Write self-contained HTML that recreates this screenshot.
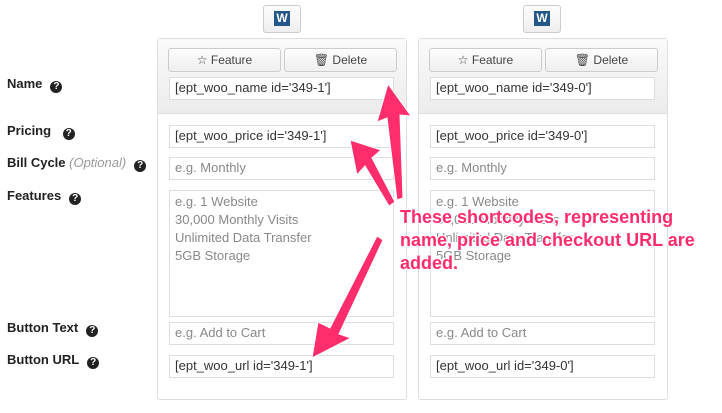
<!DOCTYPE html>
<html><head><style>
body{margin:0;width:722px;height:413px;background:#fff;font-family:"Liberation Sans",sans-serif;position:relative;overflow:hidden}
.a{position:absolute}
.lbl{position:absolute;left:7px;font-size:13px;color:#222;font-weight:bold;font-family:"Liberation Sans",sans-serif}
.q{display:inline-block;width:12px;height:12px;border-radius:50%;background:#222;color:#fff;font-size:10px;text-align:center;line-height:12px;margin-left:8px;vertical-align:-1px}
.col{position:absolute;top:38px;width:248px;height:360px;border:1px solid #ddd;border-radius:3px;background:#fff}
.hd{position:absolute;left:0;top:0;right:0;height:74px;background:linear-gradient(#fafafa,#ececec);border-bottom:1px solid #ddd}
.btn{position:absolute;top:9px;height:22px;border:1px solid #ccc;border-radius:3px;background:linear-gradient(#fdfdfd,#efefef);font-size:12px;color:#444;text-align:center;line-height:22px}
.in{position:absolute;left:11px;width:225px;border:1px solid #ddd;background:#fff;font-size:13px;color:#333;padding-left:5px;box-sizing:border-box;line-height:20px}
.ph{color:#888}
.wb{position:absolute;top:5px;width:36px;height:26px;border:1px solid #ccc;border-radius:3px;background:linear-gradient(#fdfdfd,#eee)}
.wb span{position:absolute;left:10px;top:5px;width:16px;height:15px;background:#23578a;color:#fff;font-weight:bold;font-size:12px;text-align:center;line-height:15px}
</style></head><body>
<div class="lbl" style="top:76px">Name<span class="q">?</span></div>
<div class="lbl" style="top:123px">Pricing <span class="q">?</span></div>
<div class="lbl" style="top:155px">Bill Cycle <i style="color:#999;font-weight:normal">(Optional)</i><span class="q">?</span></div>
<div class="lbl" style="top:188px">Features<span class="q">?</span></div>
<div class="lbl" style="top:320px">Button Text<span class="q">?</span></div>
<div class="lbl" style="top:352px">Button URL<span class="q">?</span></div>

<div class="wb" style="left:263px"><span>W</span></div>
<div class="wb" style="left:523px"><span>W</span></div>

<div class="col" style="left:157px">
<div class="hd"></div>
<div class="btn" style="left:10px;width:111px">☆ Feature</div>
<div class="btn" style="left:126px;width:111px">🗑 Delete</div>
<div class="in" style="top:38px;height:23px">[ept_woo_name id='349-1']</div>
<div class="in" style="top:86px;height:23px">[ept_woo_price id='349-1']</div>
<div class="in ph" style="top:118px;height:23px">e.g. Monthly</div>
<div class="in ph" style="top:151px;height:127px;line-height:18px;padding-top:2px">e.g. 1 Website<br>30,000 Monthly Visits<br>Unlimited Data Transfer<br>5GB Storage</div>
<div class="in ph" style="top:283px;height:23px">e.g. Add to Cart</div>
<div class="in" style="top:316px;height:23px">[ept_woo_url id='349-1']</div>
</div>

<div class="col" style="left:418px">
<div class="hd"></div>
<div class="btn" style="left:10px;width:111px">☆ Feature</div>
<div class="btn" style="left:126px;width:111px">🗑 Delete</div>
<div class="in" style="top:38px;height:23px">[ept_woo_name id='349-0']</div>
<div class="in" style="top:86px;height:23px">[ept_woo_price id='349-0']</div>
<div class="in ph" style="top:118px;height:23px">e.g. Monthly</div>
<div class="in ph" style="top:151px;height:127px;line-height:18px;padding-top:2px">e.g. 1 Website<br>30,000 Monthly Visits<br>Unlimited Data Transfer<br>5GB Storage</div>
<div class="in ph" style="top:283px;height:23px">e.g. Add to Cart</div>
<div class="in" style="top:316px;height:23px">[ept_woo_url id='349-0']</div>
</div>

<svg class="a" style="left:0;top:0" width="722" height="413">
<g fill="#ff2d6c" stroke="#fff" stroke-width="1">
<polygon points="403,198 397,200 387,118 377,122 388,84 411,116 400,115"/>
<polygon points="395,202 389,206 365,166 357,175 350,140 381,150 372,158"/>
<polygon points="377,236 383,240 339,334 351,338 312,358 318,322 330,328"/>
</g>
</svg>
<div class="a" style="left:400px;top:206px;font-size:18px;font-weight:bold;color:#ff2d6c;line-height:23px;text-shadow:-1px -1px 0 #fff,1px -1px 0 #fff,-1px 1px 0 #fff,1px 1px 0 #fff">These shortcodes, representing<br>name, price and checkout URL are<br>added.</div>
</body></html>
